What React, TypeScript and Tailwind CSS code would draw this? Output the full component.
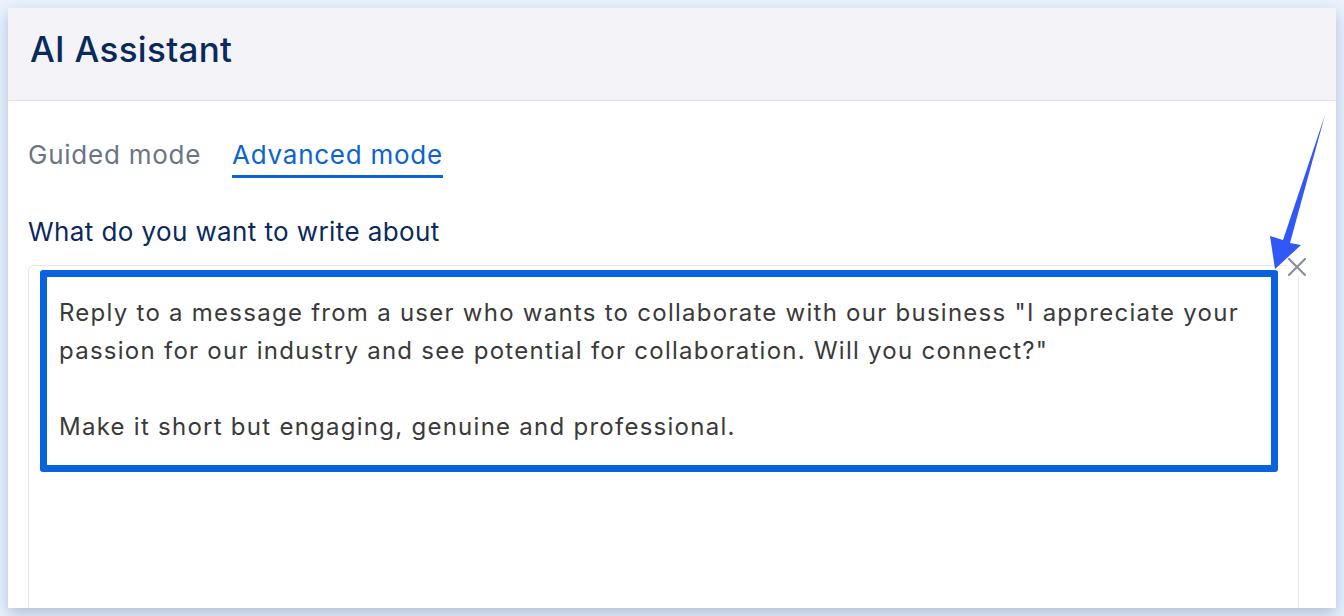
const font = { fontFamily: 'Inter, "Noto Sans", sans-serif' };

export default function App() {
  return (
    <div className="relative h-[616px] w-[1344px] overflow-hidden bg-[#e9f2fd] pt-2 pl-2" style={font}>
      <div className="h-[600px] w-[1328px] overflow-hidden bg-white shadow-[0_6px_14px_rgba(110,130,170,0.45)]">
        {/* Header */}
        <div className="flex h-[93px] items-center border-b border-[#e4e6ec] bg-[#f4f4f8] pb-[10px] pl-[22px]">
          <h1 className="text-[35px] font-medium tracking-[0.3px] text-[#0b2a5c]">AI Assistant</h1>
        </div>

        <div className="px-5">
          {/* Tabs */}
          <div className="mt-[38px] flex gap-[31px] text-[26px] leading-[32px] tracking-[0.75px]">
            <button className="pb-[7px] text-[#6b7486]">Guided mode</button>
            <button className="border-b-[3px] border-[#0b63d6] pb-[4px] text-[#0b63d6]">Advanced mode</button>
          </div>

          <div className="mt-[38px] text-[26px] leading-[32px] tracking-[0.4px] text-[#0b2a5c]">
            What do you want to write about
          </div>

          {/* Textarea */}
          <div className="relative mt-[17px] h-[400px] w-[1271px] rounded-tl-md border border-[#e3e5ea] pt-[4px] pl-[11px]">
            <div className="h-[202px] w-[1238px] rounded-[3px] border-[7px] border-[#0a62de] px-[12px] pt-[17px] text-[24px] leading-[38px] tracking-[1.26px] text-[#3a3a3a]">
              <p className="whitespace-nowrap">Reply to a message from a user who wants to collaborate with our business "I appreciate your</p>
              <p className="whitespace-nowrap">passion for our industry and see potential for collaboration. Will you connect?"</p>
              <p className="mt-[38px] whitespace-nowrap">Make it short but engaging, genuine and professional.</p>
            </div>
            <button className="absolute -top-[9px] -right-[9px] bg-white p-[1px]">
              <svg width="18" height="18" viewBox="0 0 18 18">
                <path d="M1 1L17 17M17 1L1 17" stroke="#8a8f99" strokeWidth="2.2" strokeLinecap="round" />
              </svg>
            </button>
          </div>
        </div>
      </div>

      {/* Annotation arrow */}
      <svg className="pointer-events-none absolute left-0 top-0" width="1344" height="616">
        <polygon points="1325,115 1290,243 1301,245 1275,269 1270,236 1283,240" fill="#3257f7" />
      </svg>
    </div>
  );
}
